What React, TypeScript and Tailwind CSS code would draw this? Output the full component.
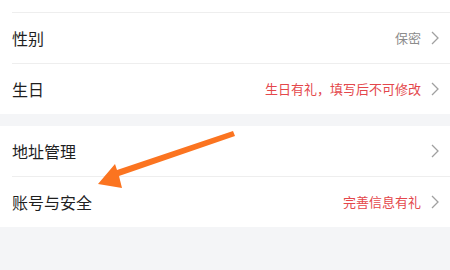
const font = { fontFamily: '"Noto Sans CJK SC", "Noto Sans", sans-serif' };

const Chevron = () => (
  <svg width="8" height="14" viewBox="0 0 8 14" className="ml-[10px] shrink-0">
    <path d="M1 1l6 6-6 6" fill="none" stroke="#a0a0a0" strokeWidth="1.3" />
  </svg>
);

type RowProps = { label: string; value?: string; tone?: 'gray' | 'red' };

const Row = ({ label, value, tone = 'gray' }: RowProps) => (
  <div className="flex h-[50px] items-center bg-white pl-3 pr-[11px]">
    <span className="flex-1 text-[16px] text-[#1f1f1f]">{label}</span>
    {value && (
      <span
        className={
          tone === 'red'
            ? 'text-[13px] text-[#e4474b]'
            : 'text-[13px] text-[#8c8c8c]'
        }
      >
        {value}
      </span>
    )}
    <Chevron />
  </div>
);

const Divider = () => (
  <div className="bg-white pl-3">
    <div className="h-px bg-[#eeeeee]" />
  </div>
);

export default function App() {
  return (
    <div className="relative h-[270px] w-[450px] overflow-hidden bg-[#f4f5f7]" style={font}>
      <div className="h-[12px] bg-white" />
      <Divider />
      <Row label="性别" value="保密" />
      <Divider />
      <Row label="生日" value="生日有礼，填写后不可修改" tone="red" />

      <div className="mt-[12px]">
        <Row label="地址管理" />
        <Divider />
        <Row label="账号与安全" value="完善信息有礼" tone="red" />
      </div>

      {/* annotation arrow */}
      <svg className="absolute left-0 top-0" width="450" height="270" viewBox="0 0 450 270">
        <path
          d="M233 131 L235 136 L119 176 L122 188 L98 184 L115 164 L117 170 Z"
          fill="#fb7420"
        />
      </svg>
    </div>
  );
}
